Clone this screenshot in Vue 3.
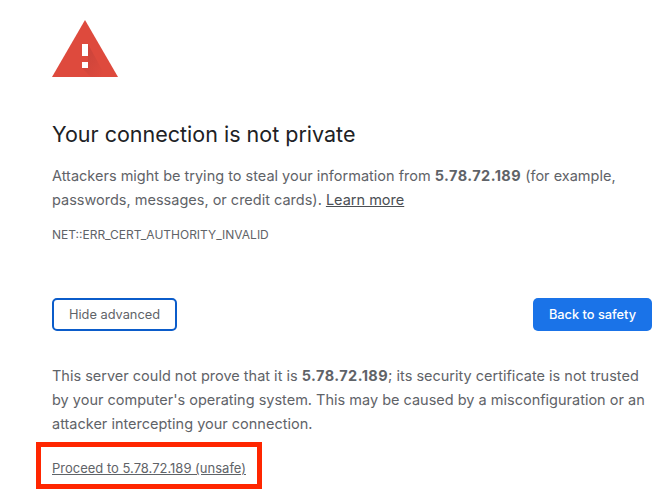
<script setup>
const host = '5.78.72.189'
</script>

<template>
  <main class="page">
    <svg class="icon" width="66" height="57" viewBox="0 0 66 57" aria-hidden="true">
      <defs>
        <linearGradient id="shade" x1="0.1" y1="0.1" x2="0.9" y2="0.9">
          <stop offset="0" stop-color="#c9433a" />
          <stop offset="1" stop-color="#de4a3d" />
        </linearGradient>
      </defs>
      <path d="M33 0 L66 57 H0 Z" fill="#de4a3d" />
      <path d="M36 24 L54 57 H39 L30 48 V42 H36 V36 H30 Z" fill="url(#shade)" />
      <rect x="30" y="24" width="6" height="12" fill="#fff" />
      <rect x="30" y="42" width="6" height="6" fill="#fff" />
    </svg>
    <h1 class="title">Your connection is not private</h1>
    <p class="text">
      Attackers might be trying to steal your information from <b>{{ host }}</b> (for example, passwords, messages, or credit cards). <a class="link">Learn more</a>
    </p>
    <div class="code">NET::ERR_CERT_AUTHORITY_INVALID</div>
    <div class="actions">
      <button class="btn outline">Hide advanced</button>
      <button class="btn primary">Back to safety</button>
    </div>
    <p class="text details">
      This server could not prove that it is <b>{{ host }}</b>; its security certificate is not trusted by your computer's operating system. This may be caused by a misconfiguration or an attacker intercepting your connection.
    </p>
    <div class="proceed-wrap">
      <a class="proceed">Proceed to {{ host }} (unsafe)</a>
      <div class="highlight"></div>
    </div>
  </main>
</template>

<style scoped>
.page {
  box-sizing: border-box;
  width: 671px;
  height: 491px;
  overflow: hidden;
  padding: 20px 19px 0 52px;
  background: #fff;
  font-family: Inter, "Liberation Sans", sans-serif;
  color: #5f6368;
}
.icon { display: block; }
.title {
  margin: 43px 0 0;
  font-size: 21.5px;
  line-height: 28px;
  font-weight: 400;
  color: #202124;
}
.text {
  margin: 0;
  font-size: 14.5px;
  line-height: 24px;
}
.title + .text { margin-top: 16px; }
.text b { font-weight: 700; letter-spacing: 0.45px; }
.link { text-decoration: underline; color: #4b4f54; }
.code {
  margin-top: 15px;
  font-size: 12px;
  line-height: 16px;
}
.actions {
  display: flex;
  justify-content: space-between;
  margin-top: 55px;
}
.btn {
  box-sizing: border-box;
  height: 33px;
  border-radius: 5px;
  font-family: inherit;
  font-size: 12.8px;
  padding: 0;
}
.outline {
  width: 125px;
  background: #fff;
  color: #5f6368;
  border: 2px solid #0b5cca;
}
.primary {
  width: 119px;
  background: #1a73e8;
  color: #fff;
  border: none;
  font-weight: 500;
}
.details { margin-top: 33px; }
.proceed-wrap {
  position: relative;
  margin-top: 23px;
  font-size: 13px;
  line-height: 18px;
}
.proceed { text-decoration: underline; }
.highlight {
  position: absolute;
  box-sizing: border-box;
  left: -16px;
  top: -17px;
  width: 226px;
  height: 47px;
  border: 5px solid #ff2600;
}
</style>
